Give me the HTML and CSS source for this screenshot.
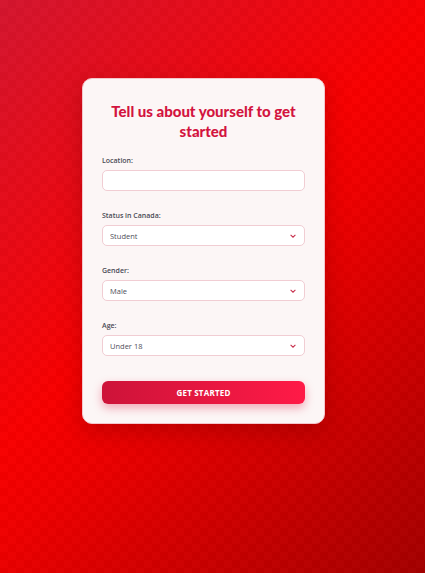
FILE: index.html
```html
<!DOCTYPE html>
<html lang="en">
<head>
    <meta charset="UTF-8">
    <meta name="viewport" content="width=device-width, initial-scale=1.0">
    <title>Get Started</title>
    <link rel="stylesheet" href="styles.css">
</head>
<body>
    <div class="page">
        <form class="card">
            <h1>Tell us about yourself to get started</h1>

            <div class="field">
                <label for="location">Location:</label>
                <input type="text" id="location">
            </div>

            <div class="field">
                <label for="status">Status in Canada:</label>
                <div class="select-wrap">
                    <select id="status">
                        <option>Student</option>
                        <option>Permanent Resident</option>
                        <option>Citizen</option>
                    </select>
                    <svg class="chevron" viewBox="0 0 10 6"><path d="M1 1l4 4 4-4"/></svg>
                </div>
            </div>

            <div class="field">
                <label for="gender">Gender:</label>
                <div class="select-wrap">
                    <select id="gender">
                        <option>Male</option>
                        <option>Female</option>
                        <option>Other</option>
                    </select>
                    <svg class="chevron" viewBox="0 0 10 6"><path d="M1 1l4 4 4-4"/></svg>
                </div>
            </div>

            <div class="field">
                <label for="age">Age:</label>
                <div class="select-wrap">
                    <select id="age">
                        <option>Under 18</option>
                        <option>18 - 25</option>
                        <option>26 - 35</option>
                    </select>
                    <svg class="chevron" viewBox="0 0 10 6"><path d="M1 1l4 4 4-4"/></svg>
                </div>
            </div>

            <button type="button" class="start-btn">GET STARTED</button>
        </form>
    </div>
</body>
</html>
```

FILE: styles.css
```css
html, body {
    margin: 0;
    padding: 0;
}
body {
    font-family: "Open Sans", "Noto Sans", sans-serif;
    min-height: 573px;
    background-color: #e00000;
    background-image:
        repeating-conic-gradient(rgba(0, 0, 0, 0.02) 0 25%, rgba(255, 255, 255, 0.012) 0 50%),
        linear-gradient(135deg, #d4152f 0%, #f80000 45%, #ee0000 55%, #a30000 100%);
    background-size: 16px 16px, 100% 100%;
}
.page {
    padding: 78px 0 0 82px;
}
.card {
    width: 203px;
    padding: 22px 19px 19px;
    background-color: #fcf6f6;
    border: 1px solid #f3c6cc;
    border-radius: 10px;
    box-shadow: 0 8px 24px rgba(90, 0, 0, 0.3);
    display: flex;
    flex-direction: column;
}
.card h1 {
    margin: 0 0 15px;
    color: #d3143f;
    font-family: Lato, "Open Sans", sans-serif;
    font-size: 15px;
    font-weight: 900;
    line-height: 20px;
    text-align: center;
}
.field {
    display: flex;
    flex-direction: column;
    gap: 4px;
    margin-bottom: 20px;
}
.field label {
    font-size: 7px;
    font-weight: 600;
    line-height: 10px;
    color: #4a4a55;
}
.field input,
.field select {
    display: block;
    box-sizing: border-box;
    width: 100%;
    height: 21px;
    margin: 0;
    padding: 0 7px;
    background: #fff;
    border: 1px solid #f1cdd3;
    border-radius: 5px;
    font-family: inherit;
    font-size: 7.5px;
    color: #4f4f5a;
    outline: none;
    appearance: none;
    -webkit-appearance: none;
}
.select-wrap {
    position: relative;
}
.chevron {
    position: absolute;
    right: 9px;
    top: 9px;
    width: 6px;
    height: 4px;
    fill: none;
    stroke: #c8324f;
    stroke-width: 1.8;
}
.start-btn {
    margin-top: 5px;
    height: 23px;
    border: none;
    border-radius: 6px;
    background: linear-gradient(90deg, #cd1339 0%, #ff1a47 100%);
    color: #fff;
    font-family: inherit;
    font-size: 8px;
    font-weight: 700;
    letter-spacing: 0.2px;
    box-shadow: 0 4px 10px rgba(220, 20, 60, 0.35);
    cursor: pointer;
}
```
